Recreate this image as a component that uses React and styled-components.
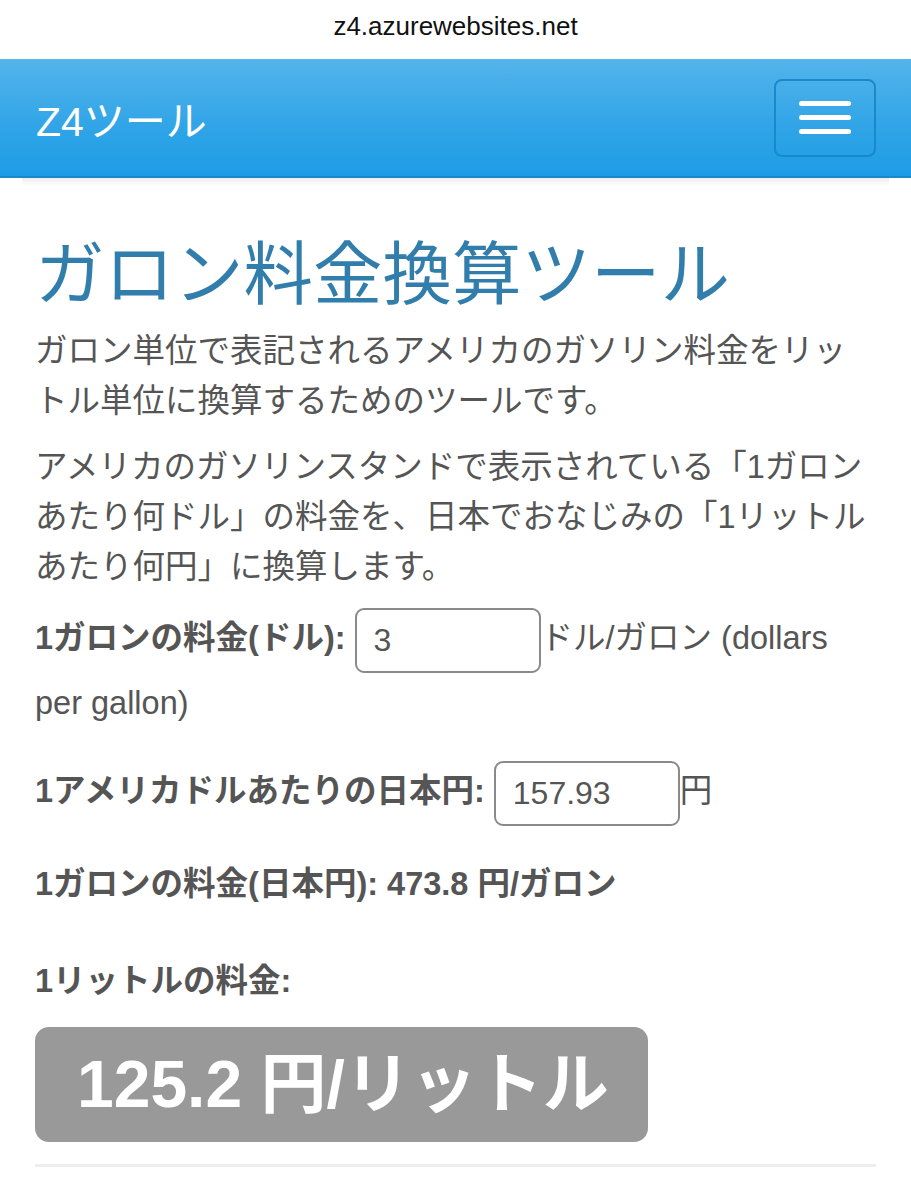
import React from 'react';
import styled, { createGlobalStyle } from 'styled-components';

const GlobalStyle = createGlobalStyle`
  * {
    box-sizing: border-box;
  }
  body {
    margin: 0;
    background: #fff;
    color: #555;
    font-family: "Liberation Sans", "Noto Sans CJK JP", sans-serif;
  }
`;

const App = () => {
    return (
        <>
            <GlobalStyle />
            <AddressBar>z4.azurewebsites.net</AddressBar>
            <Navbar>
                <Brand href="#">Z4ツール</Brand>
                <Toggle aria-label="menu">
                    <Bar />
                    <Bar />
                    <Bar />
                </Toggle>
            </Navbar>
            <NavShadow />
            <Container>
                <Title>ガロン料金換算ツール</Title>
                <Lead>
                    ガロン単位で表記されるアメリカのガソリン料金をリッ<br />トル単位に換算するためのツールです。
                </Lead>
                <Lead>
                    アメリカのガソリンスタンドで表示されている「1ガロン<br />あたり何ドル」の料金を、日本でおなじみの「1リットル<br />あたり何円」に換算します。
                </Lead>

                <FormGroup $gap="27px">
                    <Label>1ガロンの料金(ドル):</Label>
                    <Field defaultValue="3" />ドル/ガロン (dollars per gallon)
                </FormGroup>

                <FormGroup $gap="28px">
                    <Label>1アメリカドルあたりの日本円:</Label>
                    <Field defaultValue="157.93" />円
                </FormGroup>

                <FormGroup $gap="36px">
                    <Label>1ガロンの料金(日本円): 473.8 円/ガロン</Label>
                </FormGroup>

                <FormGroup $gap="15px">
                    <Label>1リットルの料金:</Label>
                </FormGroup>

                <ResultBadge>125.2 円/リットル</ResultBadge>
                <Divider />
            </Container>
        </>
    );
};

export default App;

const AddressBar = styled.div`
  height: 59px;
  display: flex;
  align-items: center;
  justify-content: center;
  padding-bottom: 6px;
  font-size: 26px;
  color: #111;
`;

const Navbar = styled.nav`
  height: 119px;
  display: flex;
  align-items: center;
  justify-content: space-between;
  padding: 0 35px 0 36px;
  background-image: linear-gradient(#54b4eb, #2fa4e7 60%, #1d9ce5);
  border-bottom: 2px solid #178acc;
`;

const Brand = styled.a`
  color: #fff;
  font-size: 41px;
  text-decoration: none;
`;

const Toggle = styled.button`
  width: 102px;
  height: 78px;
  padding: 0;
  display: flex;
  flex-direction: column;
  align-items: center;
  justify-content: center;
  gap: 9px;
  background: transparent;
  border: 2px solid #178acc;
  border-radius: 8px;
`;

const Bar = styled.span`
  display: block;
  width: 52px;
  height: 5px;
  border-radius: 3px;
  background: #fff;
`;

const NavShadow = styled.div`
  height: 8px;
  margin: 0 22px;
  background: linear-gradient(rgba(0, 0, 0, 0.07), rgba(0, 0, 0, 0));
`;

const Container = styled.main`
  padding: 0 35px;
  font-size: 32.5px;
`;

const Title = styled.h1`
  margin: 45px 0 20px;
  font-size: 69.5px;
  line-height: 75px;
  font-weight: 400;
  color: #317eac;
  font-family: "Noto Sans CJK JP", sans-serif;
`;

const Lead = styled.p`
  margin: 0 0 16px;
  line-height: 50px;
`;

const FormGroup = styled.div`
  margin-bottom: ${(p) => p.$gap};
  line-height: 61px;
`;

const Label = styled.label`
  font-weight: bold;
  margin-right: 9px;
`;

const Field = styled.input`
  width: 186px;
  height: 65px;
  padding: 0 17px;
  vertical-align: middle;
  border: 2px solid #8a8a8a;
  border-radius: 9px;
  font-family: inherit;
  font-size: 32px;
  color: #555;
  outline: none;
`;

const ResultBadge = styled.div`
  display: inline-block;
  height: 115px;
  padding: 0 39px 0 42px;
  line-height: 115px;
  border-radius: 14px;
  background: #999;
  color: #fff;
  font-size: 66px;
  font-weight: bold;
  white-space: nowrap;
`;

const Divider = styled.hr`
  margin: 22px 0 0;
  border: 0;
  border-top: 3px solid #eee;
`;
